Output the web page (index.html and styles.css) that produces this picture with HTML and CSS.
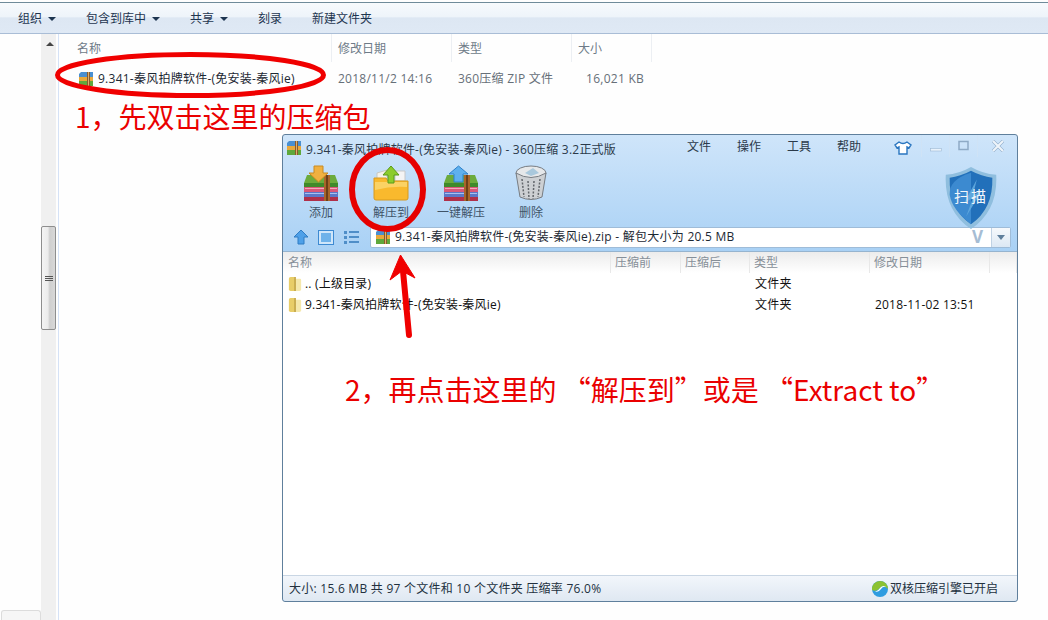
FILE: index.html
```html
<!DOCTYPE html>
<html lang="en">
<head>
    <meta charset="UTF-8">
    <title>解压步骤</title>
    <link rel="stylesheet" href="styles.css">
</head>
<body>

    <svg class="defs" width="0" height="0">
        <symbol id="zipSmall" viewBox="0 0 16 16">
            <path d="M1 3 L3 1 H15 V6 H1 Z" fill="#4a8fd0"/>
            <path d="M1 6 H15 V10 H1 Z" fill="#e9a83a"/>
            <path d="M1 10 H15 V15 H1 Z" fill="#5fa83c"/>
            <rect x="9" y="1" width="3" height="14" fill="#8a5a2a"/>
            <rect x="10" y="1" width="1" height="14" fill="#d9b070"/>
        </symbol>
        <symbol id="books" viewBox="0 0 34 26">
            <path d="M3 0 H31 L34 8 V12 H0 V8 Z" fill="#6cab3c"/>
            <path d="M0 8 H34 V12 H0 Z" fill="#3f8a2a"/>
            <rect x="0" y="12" width="34" height="5" fill="#d8587a"/>
            <rect x="1" y="13" width="32" height="1" fill="#f3a9bd"/>
            <rect x="0" y="17" width="34" height="5" fill="#5a78c8"/>
            <rect x="1" y="18" width="32" height="1" fill="#a9c0ee"/>
            <rect x="0" y="22" width="34" height="4" fill="#b0304a"/>
            <rect x="20" y="0" width="6" height="26" fill="#a8662a"/>
            <rect x="22" y="0" width="2" height="26" fill="#6e3f18"/>
        </symbol>
        <symbol id="folderSmall" viewBox="0 0 16 18">
            <path d="M1 3 Q1 1 3 1 H7 V17 H3 Q1 17 1 15 Z" fill="#e8cd68"/>
            <path d="M7 3 H14 Q15 3 15 5 V15 Q15 17 13 17 H7 Z" fill="#f5e8ac"/>
            <path d="M7 1 H9 V17 H7 Z" fill="#c4a544"/>
        </symbol>
    </svg>

    <div class="toolbar">
        <span class="tool">组织<i class="caret"></i></span>
        <span class="tool">包含到库中<i class="caret"></i></span>
        <span class="tool">共享<i class="caret"></i></span>
        <span class="tool">刻录</span>
        <span class="tool">新建文件夹</span>
    </div>

    <div class="explorer">
        <div class="nav">
            <div class="nav-foot"></div>
        </div>
        <div class="scrollbar">
            <i class="scroll-up"></i>
            <div class="thumb"><b></b><b></b><b></b></div>
        </div>
        <div class="files">
            <div class="file-head">
                <span>名称</span>
                <span>修改日期</span>
                <span>类型</span>
                <span>大小</span>
            </div>
            <div class="file-row">
                <span class="file-name"><svg width="16" height="16"><use href="#zipSmall"/></svg>9.341-秦风拍牌软件-(免安装-秦风ie)</span>
                <span>2018/11/2 14:16</span>
                <span>360压缩 ZIP 文件</span>
                <span class="file-size">16,021 KB</span>
            </div>
        </div>
    </div>

    <div class="zip-window">
        <div class="title-bar">
            <svg width="16" height="16"><use href="#zipSmall"/></svg>
            <span class="title">9.341-秦风拍牌软件-(免安装-秦风ie) - 360压缩 3.2正式版</span>
            <div class="menu">
                <span>文件</span>
                <span>操作</span>
                <span>工具</span>
                <span>帮助</span>
            </div>
            <svg class="shirt" width="18" height="14" viewBox="0 0 18 14">
                <path d="M5 1 L1 4 L3 7 L5 6 V13 H13 V6 L15 7 L17 4 L13 1 Q9 4 5 1 Z" fill="#fff" stroke="#2a76c0" stroke-width="1.4"/>
            </svg>
            <div class="win-btns">
                <span class="win-btn"><svg width="12" height="12"><rect x=".5" y="8.500" width="11" height="2.500" fill="#e9f2fb" stroke="#9db8d2" stroke-width=".6"/></svg></span>
                <span class="win-btn"><svg width="12" height="12"><rect x="1" y="1.500" width="9" height="8" fill="none" stroke="#8eaac6" stroke-width="1.500"/></svg></span>
                <span class="win-btn close"><svg width="12" height="12"><path d="M1 1 L11 11 M11 1 L1 11" stroke="#8eaac6" stroke-width="3.200"/><path d="M1 1 L11 11 M11 1 L1 11" stroke="#eef4fa" stroke-width="2.200"/></svg></span>
            </div>
        </div>

        <div class="actions">
            <div class="action">
                <svg width="36" height="36" viewBox="0 0 36 36">
                    <use href="#books" x="1" y="10" width="34" height="26"/>
                    <path d="M11 1 H20 V8 H25 L15.500 17 L6 8 H11 Z" fill="#f0b040" stroke="#c98a20"/>
                </svg>
                <span>添加</span>
            </div>
            <div class="action">
                <svg width="36" height="36" viewBox="0 0 36 36">
                    <path d="M4 8 L14 5 V16 H4 Z" fill="#f4f2ea" stroke="#c8c8c0"/>
                    <path d="M22 6 H32 V16 H22 Z" fill="#f4f4f4" stroke="#c8c8c8"/>
                    <path d="M1 13 H13 L15 16 H35 V33 Q35 35 33 35 H3 Q1 35 1 33 Z" fill="#f9b92d" stroke="#d69a20"/>
                    <path d="M2 17 H34 V22 Q18 21 2 25 Z" fill="#fbd264"/>
                    <path d="M15 18 V10 H10 L18 1 L26 10 H21 V18 Z" fill="#8ccc2c" stroke="#5a9a1a"/>
                </svg>
                <span>解压到</span>
            </div>
            <div class="action">
                <svg width="36" height="36" viewBox="0 0 36 36">
                    <use href="#books" x="1" y="10" width="34" height="26"/>
                    <path d="M11 17 V9 H6 L15.500 1 L25 9 H20 V17 Z" fill="#5fb0ee" stroke="#2f80c8"/>
                </svg>
                <span>一键解压</span>
            </div>
            <div class="action">
                <svg width="36" height="36" viewBox="0 0 36 36">
                    <ellipse cx="18" cy="8" rx="15" ry="7" fill="#e6e8ea" stroke="#777c82"/>
                    <path d="M3 8 L7 32 Q18 37 29 32 L33 8 Q18 17 3 8 Z" fill="#cdd0d3" stroke="#777c82"/>
                    <path d="M9 14 L11 32 M15 16 L16 34 M21 16 L20 34 M27 14 L25 32" stroke="#62666b" stroke-width="1.500" stroke-dasharray="2 1.500"/>
                    <path d="M12 8 L20 3 L26 8 L18 11 Z" fill="#a9c8dc"/>
                </svg>
                <span>删除</span>
            </div>
            <div class="shield">
                <svg width="54" height="64" viewBox="0 0 54 66">
                    <path d="M27 1 Q39 8 53 9 Q55 46 27 65 Q-1 46 1 9 Q15 8 27 1 Z" fill="#8fbede"/>
                    <path d="M27 5 Q38 11 49 12 Q50 44 27 60 Q4 44 5 12 Q16 11 27 5 Z" fill="#2270ba"/>
                    <path d="M5 30 Q4 14 27 7 V60 Q8 46 5 30 Z" fill="#3c8ad0"/>
                    <path d="M33 14 L20 38 L29 33 L22 52 L38 26 L29 30 Z" fill="#5ea6dc"/>
                </svg>
                <span>扫描</span>
            </div>
        </div>

        <div class="address-row">
            <svg class="nav-up" width="16" height="16" viewBox="0 0 16 16">
                <path d="M5 15 V8 H1 L8 1 L15 8 H11 V15 Z" fill="#4ea0e8" stroke="#2f7cc4"/>
            </svg>
            <svg class="nav-view" width="16" height="15" viewBox="0 0 16 15">
                <rect x=".5" y=".5" width="15" height="14" fill="#cfe6fa" stroke="#3d8ad2"/>
                <rect x="3" y="3" width="10" height="9" fill="#6eb2ea"/>
            </svg>
            <svg class="nav-list" width="15" height="15" viewBox="0 0 15 15">
                <path d="M0 1 H3 V4 H0 Z M5 1 H15 V3 H5 Z M0 6 H3 V9 H0 Z M5 6 H15 V8 H5 Z M0 11 H3 V14 H0 Z M5 11 H15 V13 H5 Z" fill="#4f8ec8"/>
            </svg>
            <div class="address">
                <svg width="16" height="16"><use href="#zipSmall"/></svg>
                <span class="address-text">9.341-秦风拍牌软件-(免安装-秦风ie).zip - 解包大小为 20.5 MB</span>
                <span class="address-v">V</span>
                <span class="address-drop"><i></i></span>
            </div>
        </div>

        <div class="list">
            <div class="list-head">
                <span>名称</span>
                <span>压缩前</span>
                <span>压缩后</span>
                <span>类型</span>
                <span>修改日期</span>
                <span></span>
            </div>
            <div class="list-row">
                <span class="list-name"><svg width="14" height="18"><use href="#folderSmall"/></svg>.. (上级目录)</span>
                <span></span>
                <span></span>
                <span>文件夹</span>
                <span></span>
                <span></span>
            </div>
            <div class="list-row">
                <span class="list-name"><svg width="14" height="18"><use href="#folderSmall"/></svg>9.341-秦风拍牌软件-(免安装-秦风ie)</span>
                <span></span>
                <span></span>
                <span>文件夹</span>
                <span>2018-11-02 13:51</span>
                <span></span>
            </div>
        </div>

        <div class="status-bar">
            <span>大小: 15.6 MB 共 97 个文件和 10 个文件夹 压缩率 76.0%</span>
            <span class="engine">
                <svg width="16" height="16" viewBox="0 0 16 16">
                    <circle cx="8" cy="8" r="8" fill="#2f9ce0"/>
                    <path d="M8 0 A8 8 0 0 1 16 8 Q11 3 8 7 Q5 11 0 9 A8 8 0 0 1 8 0 Z" fill="#8cc232"/>
                    <path d="M3 11 Q7 11 9 8 Q11 5 14 6 Q12 4 9 6 Q6 10 3 11 Z" fill="#fff"/>
                </svg>
                双核压缩引擎已开启
            </span>
        </div>
    </div>

    <!-- red marks drawn on top of the screenshot -->
    <svg class="marks" width="1048" height="620" viewBox="0 0 1048 620">
        <ellipse cx="190.500" cy="75" rx="133" ry="20.500" fill="none" stroke="#f00000" stroke-width="5"/>
        <ellipse cx="387.500" cy="189.500" rx="35.500" ry="39.500" fill="none" stroke="#e60000" stroke-width="6"/>
        <path d="M409 335 L403 271" fill="none" stroke="#f00000" stroke-width="6" stroke-linecap="round"/>
        <path d="M400.500 255 L415 278 L402 271 L390 280 Z" fill="#f00000" stroke="#f00000" stroke-linejoin="round"/>
    </svg>
    <div class="note note-one">1，先双击这里的压缩包</div>
    <div class="note note-two">2，再点击这里的 “解压到”或是 “Extract to”</div>

</body>
</html>
```

FILE: styles.css
```css
* {
    box-sizing: border-box;
}
html, body {
    margin: 0;
    height: 620px;
    overflow: hidden;
}
body {
    position: relative;
    display: flex;
    flex-direction: column;
    background-color: #fefefe;
    font-family: "Open Sans", "Noto Sans CJK SC", sans-serif;
    font-size: 12px;
    line-height: 16px;
    color: #1e2d3c;
}
.defs {
    position: absolute;
}
svg {
    flex-shrink: 0;
}

/* explorer */
.toolbar {
    display: flex;
    align-items: center;
    height: 32px;
    margin-top: 2px;
    padding: 2px 0 0 18px;
    border-top: 1px solid #6f8b9a;
    border-bottom: 1px solid #a9bdd6;
    background: linear-gradient(#f7fafd, #eef4fa 45%, #dde7f3 50%, #dfe9f5);
}
.tool {
    display: flex;
    align-items: center;
    margin-right: 30px;
    color: #1e3550;
}
.caret {
    width: 0;
    height: 0;
    margin-left: 6px;
    border: 4px solid transparent;
    border-top: 4px solid #1e3550;
    border-bottom: 0;
}
.explorer {
    display: flex;
    flex: 1;
    min-height: 0;
}
.nav {
    display: flex;
    flex-direction: column;
    justify-content: flex-end;
    width: 41px;
}
.nav-foot {
    height: 10px;
    margin-left: 1px;
    border: 1px solid #dcdcdc;
    border-bottom: 0;
    border-radius: 3px 3px 0 0;
    background-color: #f6f6f6;
}
.scrollbar {
    width: 18px;
    padding-right: 2px;
    border-right: 1px solid #d5e2f6;
    background-color: #f0f0f0;
    background-clip: content-box;
}
.scroll-up {
    display: block;
    width: 0;
    height: 0;
    margin: 8px 0 0 5px;
    border: 4px solid transparent;
    border-bottom: 4px solid #444;
    border-top: 0;
}
.thumb {
    display: flex;
    flex-direction: column;
    align-items: center;
    justify-content: center;
    gap: 1px;
    height: 104px;
    margin-top: 180px;
    border: 1px solid #8e8e8e;
    border-radius: 2px;
    background: linear-gradient(90deg, #f4f4f4, #ececec 45%, #cfcfcf 60%, #d8d8d8);
}
.thumb b {
    width: 8px;
    height: 1px;
    background-color: #555;
}
.files {
    flex: 1;
    padding-left: 18px;
}
.file-head, .file-row {
    display: grid;
    grid-template-columns: 255px 120px 120px 80px;
}
.file-head {
    height: 28px;
    color: #6e7b88;
}
.file-head span {
    padding: 7px 0 0 6px;
    border-right: 1px solid #eceff3;
}
.file-head span:first-child {
    padding-left: 0;
}
.file-row {
    align-items: center;
    height: 28px;
    margin-top: 3px;
    letter-spacing: .25px;
    color: #666f78;
}
.file-row span {
    padding-left: 6px;
    white-space: nowrap;
}
.file-row .file-name {
    display: flex;
    align-items: center;
    gap: 4px;
    padding-left: 1px;
    color: #1c2833;
}
.file-row .file-size {
    padding: 0 8px 0 0;
    text-align: right;
}

/* 360 window */
.zip-window {
    position: absolute;
    left: 282px;
    top: 134px;
    display: flex;
    flex-direction: column;
    width: 736px;
    height: 468px;
    border: 1px solid #5f7f9c;
    border-radius: 3px;
    background: linear-gradient(#cfe5fa, #a9d1f5 116px);
}
.title-bar {
    display: flex;
    align-items: center;
    height: 26px;
    padding-left: 3px;
    color: #2b3a4a;
}
.title {
    margin: 4px 0 0 4px;
    letter-spacing: .22px;
}
.menu {
    display: flex;
    gap: 26px;
    margin: 0 0 2px auto;
}
.shirt {
    margin-left: 33px;
}
.win-btns {
    display: flex;
    align-self: flex-start;
    height: 22px;
    margin-left: 9px;
}
.win-btn {
    display: flex;
    align-items: center;
    justify-content: center;
    width: 28px;
    border-left: 1px solid #cfe3f6;
}
.win-btn.close {
    width: 40px;
}
.actions {
    display: flex;
    height: 64px;
    padding: 4px 0 0 3px;
}
.action {
    display: flex;
    flex-direction: column;
    align-items: center;
    gap: 4px;
    width: 70px;
    color: #405468;
}
.shield {
    position: relative;
    height: 64px;
    margin: 1px 19px 0 auto;
}
.shield span {
    position: absolute;
    left: 0;
    right: 0;
    top: 22px;
    text-align: center;
    font-size: 15px;
    letter-spacing: 2px;
    color: #f2f7fb;
}
.address-row {
    display: flex;
    align-items: center;
    height: 24px;
    padding-left: 10px;
}
.nav-view {
    margin-left: 9px;
}
.nav-list {
    margin-left: 10px;
}
.address {
    display: flex;
    align-items: center;
    gap: 4px;
    width: 641px;
    height: 21px;
    margin-left: 11px;
    padding-left: 4px;
    border: 1px solid #9fbcd8;
    border-radius: 2px;
    background-color: #fff;
    color: #1c2833;
}
.address-text {
    flex: 1;
    letter-spacing: .25px;
}
.address-v {
    margin-right: 4px;
    font-size: 17px;
    font-weight: bold;
    color: #a6bdd4;
}
.address-drop {
    display: flex;
    align-items: center;
    justify-content: center;
    width: 19px;
    height: 19px;
    border-left: 1px solid #c0d2e4;
    background: linear-gradient(#f6f9fc, #dce8f4);
}
.address-drop i {
    width: 0;
    height: 0;
    border: 4px solid transparent;
    border-top: 5px solid #5f7f9c;
    border-bottom: 0;
}
.list {
    flex: 1;
    margin-top: 2px;
    border-top: 1px solid #96b4cf;
    background-color: #fff;
}
.list-head, .list-row {
    display: grid;
    grid-template-columns: 328px 70px 69px 120px 120px 27px;
}
.list-head {
    height: 21px;
    background: linear-gradient(#ececec, #fff);
    color: #868f98;
}
.list-head span {
    padding: 3px 0 0 4px;
    border-right: 1px solid #e8e8e8;
}
.list-head span:first-child {
    padding-left: 5px;
}
.list-row {
    align-items: center;
    height: 21px;
    letter-spacing: .2px;
    color: #111;
}
.list-row span {
    padding-left: 5px;
    white-space: nowrap;
}
.list-row .list-name {
    display: flex;
    align-items: center;
    gap: 3px;
}
.status-bar {
    display: flex;
    align-items: center;
    justify-content: space-between;
    height: 26px;
    padding: 0 19px 0 6px;
    border-top: 1px solid #c9d6e4;
    background: linear-gradient(#f2f6fb, #dfe8f2);
    border-radius: 0 0 3px 3px;
    color: #22303e;
}
.status-bar > span:first-child {
    letter-spacing: .25px;
}
.engine {
    display: flex;
    align-items: center;
    gap: 2px;
}

/* annotations */
.marks {
    position: absolute;
    left: 0;
    top: 0;
    pointer-events: none;
}
.note {
    position: absolute;
    font-family: "Noto Sans CJK SC", sans-serif;
    font-size: 28px;
    line-height: 40px;
    color: #ea0000;
    white-space: nowrap;
}
.note-one {
    left: 75px;
    top: 96px;
}
.note-two {
    left: 345px;
    top: 369px;
}
```
